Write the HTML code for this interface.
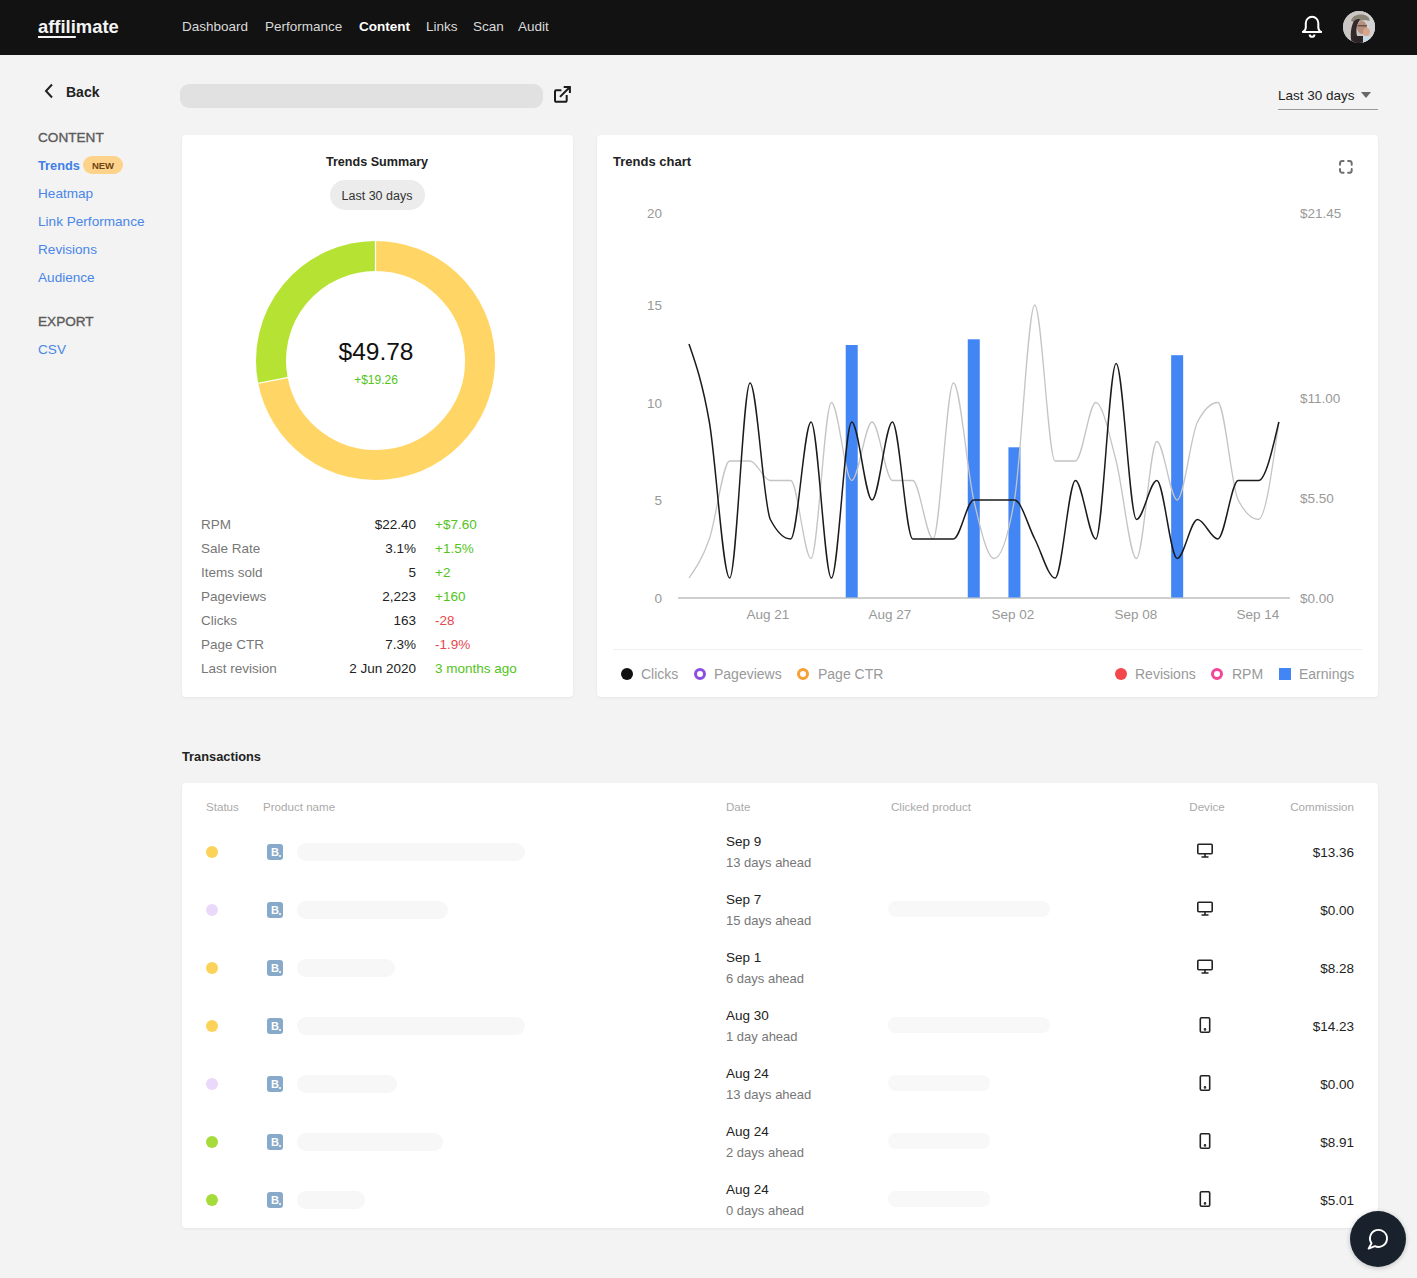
<!DOCTYPE html>
<html><head><meta charset="utf-8">
<style>
html,body{margin:0;padding:0;}
body{width:1417px;height:1278px;background:#f3f3f3;position:relative;overflow:hidden;font-family:"Liberation Sans", sans-serif;}
.t{position:absolute;white-space:nowrap;line-height:20px;}
.abs{position:absolute;}
.card{position:absolute;background:#fff;border-radius:4px;box-shadow:0 1px 3px rgba(0,0,0,0.06);}
</style></head><body>
<div class="abs" style="left:0;top:0;width:1417px;height:55px;background:#121212;"></div>
<div class="t" style="left:38px;top:17.0px;font-size:18.4px;color:#f4f4f4;font-weight:700;"><span style="text-decoration:underline;text-decoration-thickness:1.5px;text-underline-offset:2.5px">affili</span>mate</div>
<div class="t" style="left:182px;top:17.0px;font-size:13.5px;color:#d9d9d9;font-weight:400;">Dashboard</div>
<div class="t" style="left:265px;top:17.0px;font-size:13.5px;color:#d9d9d9;font-weight:400;">Performance</div>
<div class="t" style="left:359px;top:17.0px;font-size:13.5px;color:#fff;font-weight:700;">Content</div>
<div class="t" style="left:426px;top:17.0px;font-size:13.5px;color:#d9d9d9;font-weight:400;">Links</div>
<div class="t" style="left:473px;top:17.0px;font-size:13.5px;color:#d9d9d9;font-weight:400;">Scan</div>
<div class="t" style="left:518px;top:17.0px;font-size:13.5px;color:#d9d9d9;font-weight:400;">Audit</div>
<svg class="abs" style="left:1300px;top:14px" width="24" height="26" viewBox="0 0 24 26">
<path d="M5.8 9.05A6.25 6.25 0 0 1 18.3 9.05V13.5C18.3 15.5 19.5 17 21.1 17.9H2.9C4.5 17 5.8 15.5 5.8 13.5Z" fill="none" stroke="#fff" stroke-width="2" stroke-linejoin="round"/>
<path d="M9.7 20.4A2.35 2.35 0 0 0 14.4 20.4" fill="none" stroke="#fff" stroke-width="2"/></svg>
<div class="abs" style="left:1343px;top:10.8px;width:32px;height:32px;border-radius:50%;overflow:hidden;background:#cac7c5;">
<svg width="32" height="32" viewBox="0 0 32 32">
<rect width="32" height="32" fill="#c9c6c4"/>
<rect x="22" width="10" height="32" fill="#d3d2d2"/>
<path d="M8 10C9 5 14 3 19 3.5c5 .5 8 3 7.5 6.5L22 9c-3 0-6 1-8 3z" fill="#8a8376"/>
<path d="M10 12c1-3 4-4.5 7-4l-2 4c-2 4-2 9-1 13l1 7H9c-2-6-1.5-14 1-20z" fill="#33282a"/>
<ellipse cx="19" cy="16.5" rx="5" ry="6.5" fill="#b88f7d"/>
<path d="M14.5 14.8h9.5" stroke="#4a3530" stroke-width="1"/>
<ellipse cx="23.5" cy="21" rx="3.5" ry="4" fill="#d5a58d"/>
<path d="M11 25h9v7h-9z" fill="#2e2426"/>
<path d="M20 25c3 0 7 1 9 3v4h-9z" fill="#c7dbe9"/>
</svg></div>
<svg class="abs" style="left:43px;top:83px" width="12" height="16" viewBox="0 0 12 16"><path d="M9 1.5L3 8l6 6.5" fill="none" stroke="#222" stroke-width="2"/></svg>
<div class="t" style="left:66px;top:81.5px;font-size:14px;color:#222;font-weight:700;">Back</div>
<div class="t" style="left:38px;top:127.5px;font-size:13.6px;color:#5a5a5a;font-weight:400;-webkit-text-stroke:0.35px #5a5a5a;">CONTENT</div>
<div class="t" style="left:38px;top:155.5px;font-size:12.8px;color:#3f7fe6;font-weight:700;">Trends</div>
<div class="abs" style="left:83px;top:156px;width:40px;height:18px;border-radius:9px;background:#fdd38c;"></div>
<div class="t" style="left:83px;top:156.0px;font-size:9.5px;color:#6e4411;font-weight:700;width:40px;text-align:center;">NEW</div>
<div class="t" style="left:38px;top:183.5px;font-size:13.6px;color:#4a86e8;font-weight:400;">Heatmap</div>
<div class="t" style="left:38px;top:211.5px;font-size:13.6px;color:#4a86e8;font-weight:400;">Link Performance</div>
<div class="t" style="left:38px;top:239.5px;font-size:13.6px;color:#4a86e8;font-weight:400;">Revisions</div>
<div class="t" style="left:38px;top:267.5px;font-size:13.6px;color:#4a86e8;font-weight:400;">Audience</div>
<div class="t" style="left:38px;top:311.5px;font-size:13.6px;color:#5a5a5a;font-weight:400;-webkit-text-stroke:0.35px #5a5a5a;">EXPORT</div>
<div class="t" style="left:38px;top:339.5px;font-size:13.6px;color:#4a86e8;font-weight:400;">CSV</div>
<div class="abs" style="left:180px;top:84px;width:363px;height:23.5px;border-radius:9px;background:#e1e1e1;"></div>
<svg class="abs" style="left:551px;top:84px" width="22" height="22" viewBox="0 0 22 22"><path d="M10.4 6.3H5.2a1.2 1.2 0 0 0-1.2 1.2V16.6a1.2 1.2 0 0 0 1.2 1.2H14.5a1.2 1.2 0 0 0 1.2-1.2V11" fill="none" stroke="#1a1a1a" stroke-width="2"/><path d="M12.7 3H18.9V9.1M18.9 3L9 12.9" fill="none" stroke="#1a1a1a" stroke-width="2"/></svg>
<div class="t" style="left:1278px;top:85.5px;font-size:13.5px;color:#222;font-weight:400;">Last 30 days</div>
<svg class="abs" style="left:1360px;top:91px" width="12" height="8" viewBox="0 0 12 8"><path d="M1 1h10L6 7z" fill="#666"/></svg>
<div class="abs" style="left:1278px;top:109px;width:100px;height:1px;background:#9a9a9a;"></div>
<div class="card" style="left:182px;top:135px;width:391px;height:562px;"></div>
<div class="t" style="left:77px;width:600px;text-align:center;top:151.5px;font-size:12.6px;color:#222;font-weight:700;">Trends Summary</div>
<div class="abs" style="left:330px;top:180px;width:95px;height:30px;border-radius:15px;background:#ececec;"></div>
<div class="t" style="left:77px;width:600px;text-align:center;top:185.5px;font-size:12.5px;color:#333;font-weight:400;">Last 30 days</div>
<svg class="abs" style="left:0;top:0" width="1417" height="700">
<path d="M375.50,256.00A104.5,104.5 0 1 1 272.92,380.44" fill="none" stroke="#ffd666" stroke-width="30.0"/>
<path d="M272.92,380.44A104.5,104.5 0 0 1 375.50,256.00" fill="none" stroke="#b6e333" stroke-width="30.0"/>
<line x1="375.50" y1="272.00" x2="375.50" y2="240.00" stroke="#fff" stroke-width="1.2"/>
<line x1="288.63" y1="377.39" x2="257.21" y2="383.49" stroke="#fff" stroke-width="1.2"/>
</svg>
<div class="t" style="left:76px;width:600px;text-align:center;top:341.5px;font-size:24.5px;color:#111;font-weight:400;">$49.78</div>
<div class="t" style="left:76px;width:600px;text-align:center;top:369.5px;font-size:12px;color:#52c41a;font-weight:400;">+$19.26</div>
<div class="t" style="left:201px;top:514.5px;font-size:13.5px;color:#777;font-weight:400;">RPM</div>
<div class="t" style="right:1001px;top:514.5px;font-size:13.5px;color:#222;font-weight:400;">$22.40</div>
<div class="t" style="left:435px;top:514.5px;font-size:13.5px;color:#52c41a;font-weight:400;">+$7.60</div>
<div class="t" style="left:201px;top:538.5px;font-size:13.5px;color:#777;font-weight:400;">Sale Rate</div>
<div class="t" style="right:1001px;top:538.5px;font-size:13.5px;color:#222;font-weight:400;">3.1%</div>
<div class="t" style="left:435px;top:538.5px;font-size:13.5px;color:#52c41a;font-weight:400;">+1.5%</div>
<div class="t" style="left:201px;top:562.5px;font-size:13.5px;color:#777;font-weight:400;">Items sold</div>
<div class="t" style="right:1001px;top:562.5px;font-size:13.5px;color:#222;font-weight:400;">5</div>
<div class="t" style="left:435px;top:562.5px;font-size:13.5px;color:#52c41a;font-weight:400;">+2</div>
<div class="t" style="left:201px;top:586.5px;font-size:13.5px;color:#777;font-weight:400;">Pageviews</div>
<div class="t" style="right:1001px;top:586.5px;font-size:13.5px;color:#222;font-weight:400;">2,223</div>
<div class="t" style="left:435px;top:586.5px;font-size:13.5px;color:#52c41a;font-weight:400;">+160</div>
<div class="t" style="left:201px;top:610.5px;font-size:13.5px;color:#777;font-weight:400;">Clicks</div>
<div class="t" style="right:1001px;top:610.5px;font-size:13.5px;color:#222;font-weight:400;">163</div>
<div class="t" style="left:435px;top:610.5px;font-size:13.5px;color:#e5484d;font-weight:400;">-28</div>
<div class="t" style="left:201px;top:634.5px;font-size:13.5px;color:#777;font-weight:400;">Page CTR</div>
<div class="t" style="right:1001px;top:634.5px;font-size:13.5px;color:#222;font-weight:400;">7.3%</div>
<div class="t" style="left:435px;top:634.5px;font-size:13.5px;color:#e5484d;font-weight:400;">-1.9%</div>
<div class="t" style="left:201px;top:658.5px;font-size:13.5px;color:#777;font-weight:400;">Last revision</div>
<div class="t" style="right:1001px;top:658.5px;font-size:13.5px;color:#222;font-weight:400;">2 Jun 2020</div>
<div class="t" style="left:435px;top:658.5px;font-size:13.5px;color:#52c41a;font-weight:400;">3 months ago</div>
<div class="card" style="left:597px;top:135px;width:781px;height:562px;"></div>
<div class="t" style="left:613px;top:151.5px;font-size:13px;color:#222;font-weight:700;">Trends chart</div>
<svg class="abs" style="left:1338px;top:159px" width="16" height="16" viewBox="0 0 16 16" fill="none" stroke="#6f6f6f" stroke-width="2" stroke-linecap="round"><path d="M5.6 2H4.4A2.4 2.4 0 0 0 2 4.4V5.8M10.1 2H11.3A2.4 2.4 0 0 1 13.7 4.4V5.8M13.7 9.9V11.4A2.4 2.4 0 0 1 11.3 13.8H10.1M5.6 13.8H4.4A2.4 2.4 0 0 1 2 11.4V9.9"/></svg>
<div class="t" style="right:755px;top:203.5px;font-size:13.5px;color:#999;font-weight:400;">20</div>
<div class="t" style="right:755px;top:295.5px;font-size:13.5px;color:#999;font-weight:400;">15</div>
<div class="t" style="right:755px;top:393.5px;font-size:13.5px;color:#999;font-weight:400;">10</div>
<div class="t" style="right:755px;top:490.5px;font-size:13.5px;color:#999;font-weight:400;">5</div>
<div class="t" style="right:755px;top:588.5px;font-size:13.5px;color:#999;font-weight:400;">0</div>
<div class="t" style="left:1300px;top:203.5px;font-size:13.5px;color:#999;font-weight:400;">$21.45</div>
<div class="t" style="left:1300px;top:388.5px;font-size:13.5px;color:#999;font-weight:400;">$11.00</div>
<div class="t" style="left:1300px;top:488.5px;font-size:13.5px;color:#999;font-weight:400;">$5.50</div>
<div class="t" style="left:1300px;top:588.5px;font-size:13.5px;color:#999;font-weight:400;">$0.00</div>
<div class="t" style="left:468px;width:600px;text-align:center;top:604.5px;font-size:13.5px;color:#999;font-weight:400;">Aug 21</div>
<div class="t" style="left:590px;width:600px;text-align:center;top:604.5px;font-size:13.5px;color:#999;font-weight:400;">Aug 27</div>
<div class="t" style="left:713px;width:600px;text-align:center;top:604.5px;font-size:13.5px;color:#999;font-weight:400;">Sep 02</div>
<div class="t" style="left:836px;width:600px;text-align:center;top:604.5px;font-size:13.5px;color:#999;font-weight:400;">Sep 08</div>
<div class="t" style="left:958px;width:600px;text-align:center;top:604.5px;font-size:13.5px;color:#999;font-weight:400;">Sep 14</div>
<svg class="abs" style="left:0;top:0" width="1417" height="700"><line x1="678" y1="598" x2="1290" y2="598" stroke="#cfcfcf" stroke-width="2"/><rect x="845.72" y="345" width="12" height="252.50" fill="#4285f4"/><rect x="967.76" y="339.3" width="12" height="258.20" fill="#4285f4"/><rect x="1008.44" y="447.3" width="12" height="150.20" fill="#4285f4"/><rect x="1171.16" y="355.2" width="12" height="242.30" fill="#4285f4"/><path d="M689.00,578.00C695.78,568.25,702.56,558.50,709.34,539.00C716.12,519.50,722.90,461.00,729.68,461.00C736.46,461.00,743.24,461.00,750.02,461.00C756.80,461.00,763.58,480.50,770.36,480.50C777.14,480.50,783.92,480.50,790.70,480.50C797.48,480.50,804.26,558.50,811.04,558.50C817.82,558.50,824.60,402.50,831.38,402.50C838.16,402.50,844.94,480.50,851.72,480.50C858.50,480.50,865.28,422.00,872.06,422.00C878.84,422.00,885.62,480.50,892.40,480.50C899.18,480.50,905.96,480.50,912.74,480.50C919.52,480.50,926.30,539.00,933.08,539.00C939.86,539.00,946.64,383.00,953.42,383.00C960.20,383.00,966.98,470.75,973.76,500.00C980.54,529.25,987.32,558.50,994.10,558.50C1000.88,558.50,1007.66,539.00,1014.44,500.00C1021.22,461.00,1028.00,305.00,1034.78,305.00C1041.56,305.00,1048.34,461.00,1055.12,461.00C1061.90,461.00,1068.68,461.00,1075.46,461.00C1082.24,461.00,1089.02,402.50,1095.80,402.50C1102.58,402.50,1109.36,435.00,1116.14,461.00C1122.92,487.00,1129.70,558.50,1136.48,558.50C1143.26,558.50,1150.04,441.50,1156.82,441.50C1163.60,441.50,1170.38,500.00,1177.16,500.00C1183.94,500.00,1190.72,435.00,1197.50,422.00C1204.28,409.00,1211.06,402.50,1217.84,402.50C1224.62,402.50,1231.40,487.00,1238.18,500.00C1244.96,513.00,1251.74,519.50,1258.52,519.50C1265.30,519.50,1272.08,470.75,1278.86,422.00" fill="none" stroke="#c4c4c4" stroke-width="1.3"/><path d="M689.00,344.00C695.78,363.50,702.56,383.00,709.34,422.00C716.12,461.00,722.90,578.00,729.68,578.00C736.46,578.00,743.24,383.00,750.02,383.00C756.80,383.00,763.58,506.50,770.36,519.50C777.14,532.50,783.92,539.00,790.70,539.00C797.48,539.00,804.26,422.00,811.04,422.00C817.82,422.00,824.60,578.00,831.38,578.00C838.16,578.00,844.94,422.00,851.72,422.00C858.50,422.00,865.28,500.00,872.06,500.00C878.84,500.00,885.62,422.00,892.40,422.00C899.18,422.00,905.96,539.00,912.74,539.00C919.52,539.00,926.30,539.00,933.08,539.00C939.86,539.00,946.64,539.00,953.42,539.00C960.20,539.00,966.98,500.00,973.76,500.00C980.54,500.00,987.32,500.00,994.10,500.00C1000.88,500.00,1007.66,500.00,1014.44,500.00C1021.22,500.00,1028.00,526.00,1034.78,539.00C1041.56,552.00,1048.34,578.00,1055.12,578.00C1061.90,578.00,1068.68,480.50,1075.46,480.50C1082.24,480.50,1089.02,539.00,1095.80,539.00C1102.58,539.00,1109.36,363.50,1116.14,363.50C1122.92,363.50,1129.70,519.50,1136.48,519.50C1143.26,519.50,1150.04,480.50,1156.82,480.50C1163.60,480.50,1170.38,558.50,1177.16,558.50C1183.94,558.50,1190.72,519.50,1197.50,519.50C1204.28,519.50,1211.06,539.00,1217.84,539.00C1224.62,539.00,1231.40,480.50,1238.18,480.50C1244.96,480.50,1251.74,480.50,1258.52,480.50C1265.30,480.50,1272.08,451.25,1278.86,422.00" fill="none" stroke="#1b1b1b" stroke-width="1.5"/></svg>
<div class="abs" style="left:613px;top:649px;width:749px;height:1px;background:#f0f0f0;"></div>
<div class="abs" style="left:621px;top:668px;width:12px;height:12px;border-radius:50%;background:#111;"></div>
<div class="t" style="left:641px;top:663.5px;font-size:14px;color:#999;font-weight:400;">Clicks</div>
<div class="abs" style="left:694px;top:668px;width:6px;height:6px;border-radius:50%;border:3px solid #8a4fe0;"></div>
<div class="t" style="left:714px;top:663.5px;font-size:14px;color:#999;font-weight:400;">Pageviews</div>
<div class="abs" style="left:797px;top:668px;width:6px;height:6px;border-radius:50%;border:3px solid #f7a035;"></div>
<div class="t" style="left:818px;top:663.5px;font-size:14px;color:#999;font-weight:400;">Page CTR</div>
<div class="abs" style="left:1115px;top:668px;width:12px;height:12px;border-radius:50%;background:#f2484b;"></div>
<div class="t" style="left:1135px;top:663.5px;font-size:14px;color:#999;font-weight:400;">Revisions</div>
<div class="abs" style="left:1211px;top:668px;width:6px;height:6px;border-radius:50%;border:3px solid #f0479b;"></div>
<div class="t" style="left:1232px;top:663.5px;font-size:14px;color:#999;font-weight:400;">RPM</div>
<div class="abs" style="left:1279px;top:668px;width:12px;height:12px;background:#4285f4;"></div>
<div class="t" style="left:1299px;top:663.5px;font-size:14px;color:#999;font-weight:400;">Earnings</div>
<div class="t" style="left:182px;top:746.5px;font-size:12.8px;color:#222;font-weight:700;">Transactions</div>
<div class="card" style="left:182px;top:783px;width:1196px;height:445px;"></div>
<div class="t" style="left:206px;top:796.5px;font-size:11.6px;color:#aaa;font-weight:400;">Status</div>
<div class="t" style="left:263px;top:796.5px;font-size:11.6px;color:#aaa;font-weight:400;">Product name</div>
<div class="t" style="left:726px;top:796.5px;font-size:11.6px;color:#aaa;font-weight:400;">Date</div>
<div class="t" style="left:891px;top:796.5px;font-size:11.6px;color:#aaa;font-weight:400;">Clicked product</div>
<div class="t" style="left:907px;width:600px;text-align:center;top:796.5px;font-size:11.6px;color:#aaa;font-weight:400;">Device</div>
<div class="t" style="right:63px;top:796.5px;font-size:11.6px;color:#aaa;font-weight:400;">Commission</div>
<div class="abs" style="left:206px;top:846px;width:12px;height:12px;border-radius:50%;background:#fcd35a;"></div>
<div class="abs" style="left:267px;top:844px;width:16px;height:16px;border-radius:3px;background:#87a9ca;color:#fff;font-size:11px;font-weight:700;line-height:16px;text-indent:4px;">B</div><div class="abs" style="left:279px;top:855px;width:2px;height:2px;background:#dff0f0;"></div>
<div class="abs" style="left:297px;top:843px;width:228px;height:18px;border-radius:9px;background:#f7f7f7;"></div>
<div class="t" style="left:726px;top:831.5px;font-size:13.5px;color:#222;font-weight:400;">Sep 9</div>
<div class="t" style="left:726px;top:852.5px;font-size:13px;color:#777;font-weight:400;">13 days ahead</div>
<svg class="abs" style="left:1196px;top:842px" width="18" height="18" viewBox="0 0 18 18" fill="none" stroke="#222" stroke-width="1.6"><rect x="1.8" y="2.3" width="14.4" height="9.5" rx="1"/><path d="M9 11.8v3M5.5 15h7"/></svg>
<div class="t" style="right:63px;top:842.5px;font-size:13.5px;color:#222;font-weight:400;">$13.36</div>
<div class="abs" style="left:206px;top:904px;width:12px;height:12px;border-radius:50%;background:#ead9fb;"></div>
<div class="abs" style="left:267px;top:902px;width:16px;height:16px;border-radius:3px;background:#87a9ca;color:#fff;font-size:11px;font-weight:700;line-height:16px;text-indent:4px;">B</div><div class="abs" style="left:279px;top:913px;width:2px;height:2px;background:#dff0f0;"></div>
<div class="abs" style="left:297px;top:901px;width:151px;height:18px;border-radius:9px;background:#f7f7f7;"></div>
<div class="t" style="left:726px;top:889.5px;font-size:13.5px;color:#222;font-weight:400;">Sep 7</div>
<div class="t" style="left:726px;top:910.5px;font-size:13px;color:#777;font-weight:400;">15 days ahead</div>
<div class="abs" style="left:888px;top:901px;width:162px;height:16px;border-radius:8px;background:#f8f8f9;"></div>
<svg class="abs" style="left:1196px;top:900px" width="18" height="18" viewBox="0 0 18 18" fill="none" stroke="#222" stroke-width="1.6"><rect x="1.8" y="2.3" width="14.4" height="9.5" rx="1"/><path d="M9 11.8v3M5.5 15h7"/></svg>
<div class="t" style="right:63px;top:900.5px;font-size:13.5px;color:#222;font-weight:400;">$0.00</div>
<div class="abs" style="left:206px;top:962px;width:12px;height:12px;border-radius:50%;background:#fcd35a;"></div>
<div class="abs" style="left:267px;top:960px;width:16px;height:16px;border-radius:3px;background:#87a9ca;color:#fff;font-size:11px;font-weight:700;line-height:16px;text-indent:4px;">B</div><div class="abs" style="left:279px;top:971px;width:2px;height:2px;background:#dff0f0;"></div>
<div class="abs" style="left:297px;top:959px;width:98px;height:18px;border-radius:9px;background:#f7f7f7;"></div>
<div class="t" style="left:726px;top:947.5px;font-size:13.5px;color:#222;font-weight:400;">Sep 1</div>
<div class="t" style="left:726px;top:968.5px;font-size:13px;color:#777;font-weight:400;">6 days ahead</div>
<svg class="abs" style="left:1196px;top:958px" width="18" height="18" viewBox="0 0 18 18" fill="none" stroke="#222" stroke-width="1.6"><rect x="1.8" y="2.3" width="14.4" height="9.5" rx="1"/><path d="M9 11.8v3M5.5 15h7"/></svg>
<div class="t" style="right:63px;top:958.5px;font-size:13.5px;color:#222;font-weight:400;">$8.28</div>
<div class="abs" style="left:206px;top:1020px;width:12px;height:12px;border-radius:50%;background:#fcd35a;"></div>
<div class="abs" style="left:267px;top:1018px;width:16px;height:16px;border-radius:3px;background:#87a9ca;color:#fff;font-size:11px;font-weight:700;line-height:16px;text-indent:4px;">B</div><div class="abs" style="left:279px;top:1029px;width:2px;height:2px;background:#dff0f0;"></div>
<div class="abs" style="left:297px;top:1017px;width:228px;height:18px;border-radius:9px;background:#f7f7f7;"></div>
<div class="t" style="left:726px;top:1005.5px;font-size:13.5px;color:#222;font-weight:400;">Aug 30</div>
<div class="t" style="left:726px;top:1026.5px;font-size:13px;color:#777;font-weight:400;">1 day ahead</div>
<div class="abs" style="left:888px;top:1017px;width:162px;height:16px;border-radius:8px;background:#f8f8f9;"></div>
<svg class="abs" style="left:1196px;top:1016px" width="18" height="18" viewBox="0 0 18 18" fill="none" stroke="#222" stroke-width="1.6"><rect x="4.3" y="1.8" width="9.4" height="14.4" rx="1.2"/><circle cx="9" cy="13.4" r="0.5" fill="#222"/></svg>
<div class="t" style="right:63px;top:1016.5px;font-size:13.5px;color:#222;font-weight:400;">$14.23</div>
<div class="abs" style="left:206px;top:1078px;width:12px;height:12px;border-radius:50%;background:#ead9fb;"></div>
<div class="abs" style="left:267px;top:1076px;width:16px;height:16px;border-radius:3px;background:#87a9ca;color:#fff;font-size:11px;font-weight:700;line-height:16px;text-indent:4px;">B</div><div class="abs" style="left:279px;top:1087px;width:2px;height:2px;background:#dff0f0;"></div>
<div class="abs" style="left:297px;top:1075px;width:100px;height:18px;border-radius:9px;background:#f7f7f7;"></div>
<div class="t" style="left:726px;top:1063.5px;font-size:13.5px;color:#222;font-weight:400;">Aug 24</div>
<div class="t" style="left:726px;top:1084.5px;font-size:13px;color:#777;font-weight:400;">13 days ahead</div>
<div class="abs" style="left:888px;top:1075px;width:102px;height:16px;border-radius:8px;background:#f8f8f9;"></div>
<svg class="abs" style="left:1196px;top:1074px" width="18" height="18" viewBox="0 0 18 18" fill="none" stroke="#222" stroke-width="1.6"><rect x="4.3" y="1.8" width="9.4" height="14.4" rx="1.2"/><circle cx="9" cy="13.4" r="0.5" fill="#222"/></svg>
<div class="t" style="right:63px;top:1074.5px;font-size:13.5px;color:#222;font-weight:400;">$0.00</div>
<div class="abs" style="left:206px;top:1136px;width:12px;height:12px;border-radius:50%;background:#a5dc3c;"></div>
<div class="abs" style="left:267px;top:1134px;width:16px;height:16px;border-radius:3px;background:#87a9ca;color:#fff;font-size:11px;font-weight:700;line-height:16px;text-indent:4px;">B</div><div class="abs" style="left:279px;top:1145px;width:2px;height:2px;background:#dff0f0;"></div>
<div class="abs" style="left:297px;top:1133px;width:146px;height:18px;border-radius:9px;background:#f7f7f7;"></div>
<div class="t" style="left:726px;top:1121.5px;font-size:13.5px;color:#222;font-weight:400;">Aug 24</div>
<div class="t" style="left:726px;top:1142.5px;font-size:13px;color:#777;font-weight:400;">2 days ahead</div>
<div class="abs" style="left:888px;top:1133px;width:102px;height:16px;border-radius:8px;background:#f8f8f9;"></div>
<svg class="abs" style="left:1196px;top:1132px" width="18" height="18" viewBox="0 0 18 18" fill="none" stroke="#222" stroke-width="1.6"><rect x="4.3" y="1.8" width="9.4" height="14.4" rx="1.2"/><circle cx="9" cy="13.4" r="0.5" fill="#222"/></svg>
<div class="t" style="right:63px;top:1132.5px;font-size:13.5px;color:#222;font-weight:400;">$8.91</div>
<div class="abs" style="left:206px;top:1194px;width:12px;height:12px;border-radius:50%;background:#a5dc3c;"></div>
<div class="abs" style="left:267px;top:1192px;width:16px;height:16px;border-radius:3px;background:#87a9ca;color:#fff;font-size:11px;font-weight:700;line-height:16px;text-indent:4px;">B</div><div class="abs" style="left:279px;top:1203px;width:2px;height:2px;background:#dff0f0;"></div>
<div class="abs" style="left:297px;top:1191px;width:68px;height:18px;border-radius:9px;background:#f7f7f7;"></div>
<div class="t" style="left:726px;top:1179.5px;font-size:13.5px;color:#222;font-weight:400;">Aug 24</div>
<div class="t" style="left:726px;top:1200.5px;font-size:13px;color:#777;font-weight:400;">0 days ahead</div>
<div class="abs" style="left:888px;top:1191px;width:102px;height:16px;border-radius:8px;background:#f8f8f9;"></div>
<svg class="abs" style="left:1196px;top:1190px" width="18" height="18" viewBox="0 0 18 18" fill="none" stroke="#222" stroke-width="1.6"><rect x="4.3" y="1.8" width="9.4" height="14.4" rx="1.2"/><circle cx="9" cy="13.4" r="0.5" fill="#222"/></svg>
<div class="t" style="right:63px;top:1190.5px;font-size:13.5px;color:#222;font-weight:400;">$5.01</div>
<div class="abs" style="left:1350px;top:1211px;width:56px;height:56px;border-radius:50%;background:#19212d;box-shadow:0 1px 5px rgba(0,0,0,0.22);"></div>
<svg class="abs" style="left:1364px;top:1225px" width="28" height="28" viewBox="0 0 28 28"><path d="M7.54 18.28L4.6 23.6L10.9 21.1A8.5 8.5 0 1 0 7.54 18.28z" fill="none" stroke="#fff" stroke-width="1.9" stroke-linejoin="round"/></svg>
</body></html>
